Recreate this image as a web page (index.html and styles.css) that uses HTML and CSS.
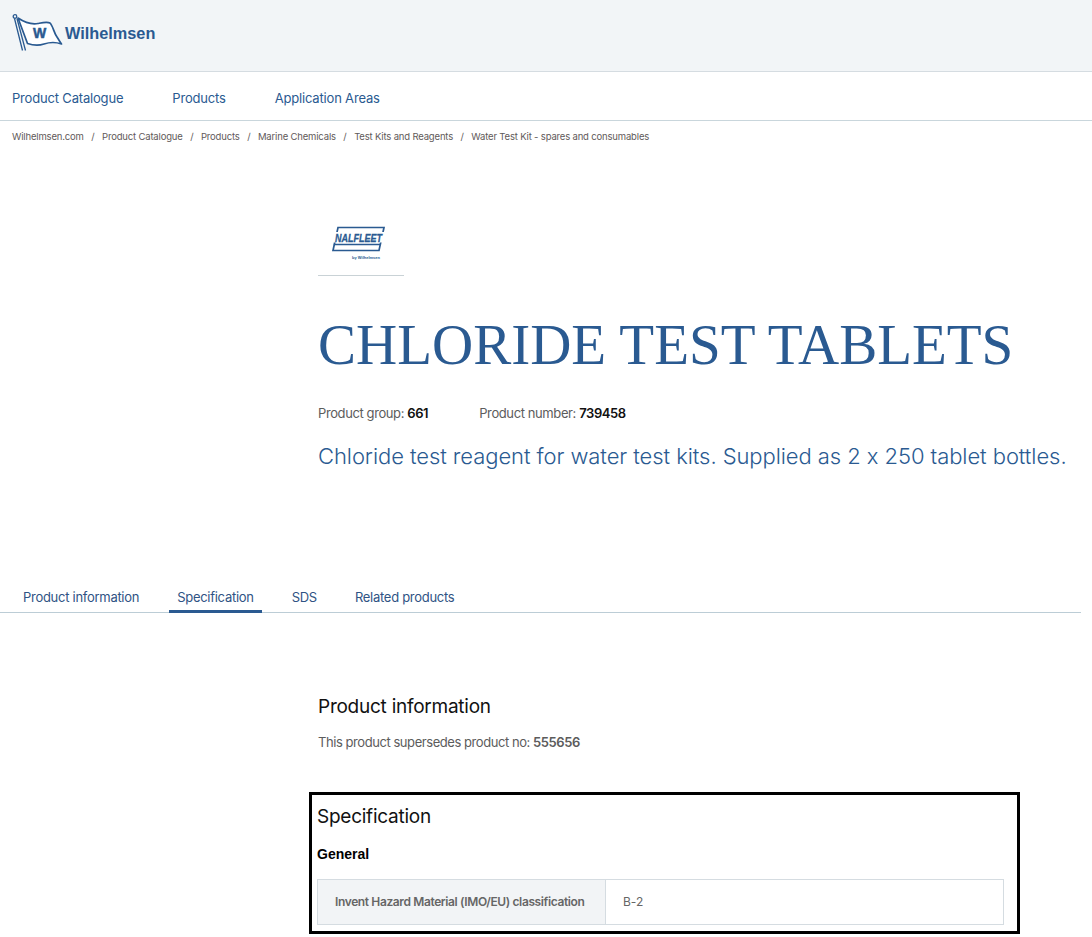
FILE: index.html
```html
<!DOCTYPE html>
<html lang="en">
<head>
<meta charset="utf-8">
<title>Chloride Test Tablets</title>
<link rel="stylesheet" href="styles.css">
</head>
<body>
<header class="top">
  <a class="logo">
    <svg class="flag" width="52" height="40" viewBox="0 0 52 40">
      <circle cx="3" cy="3.500" r="1.800" fill="none" stroke="#2a5a91" stroke-width="1.300"/>
      <path d="M2.500 5.500L10.500 37.500M5 5.500L13.500 37.500" fill="none" stroke="#2a5a91" stroke-width="1.300"/>
      <path d="M6 5C12 9 18 12 26 10.500C31 9.500 35 8.500 38 10C41 13 42 20 45 24C47 27 48 29 49.500 31C44 29 38 29 32 31C26 33 20 32 15.500 30.500L6 5Z" fill="#fff" stroke="#2a5a91" stroke-width="1.700" stroke-linejoin="round"/>
      <text x="27.500" y="24.500" text-anchor="middle" class="flag-w">W</text>
    </svg>
    <span class="logo-name">Wilhelmsen</span>
  </a>
</header>
<nav class="mainnav">
  <a>Product Catalogue</a>
  <a>Products</a>
  <a>Application Areas</a>
</nav>
<ol class="crumbs">
  <li>Wilhelmsen.com</li>
  <li>Product Catalogue</li>
  <li>Products</li>
  <li>Marine Chemicals</li>
  <li>Test Kits and Reagents</li>
  <li>Water Test Kit - spares and consumables</li>
</ol>
<main>
  <section class="hero">
    <div class="brand">
      <svg width="62" height="36" viewBox="0 0 62 36">
        <path d="M6 1.500H52L47 24.500H1Z" fill="none" stroke="#2a5a91" stroke-width="1.700"/>
        <path d="M1.800 18.500H48" fill="none" stroke="#2a5a91" stroke-width="1.300"/>
        <rect x="2" y="6" width="50" height="10.500" fill="#fff"/>
        <text x="3" y="15.500" textLength="47" lengthAdjust="spacingAndGlyphs" class="nalfleet">NALFLEET</text>
        <text x="34" y="32.500" text-anchor="middle" class="nalby">by Wilhelmsen</text>
      </svg>
    </div>
    <h1>CHLORIDE TEST TABLETS</h1>
    <div class="meta">
      <span>Product group: <b>661</b></span>
      <span>Product number: <b>739458</b></span>
    </div>
    <p class="lead">Chloride test reagent for water test kits. Supplied as 2 x 250 tablet bottles.</p>
  </section>
  <div class="tabs">
    <a>Product information</a>
    <a class="active">Specification</a>
    <a>SDS</a>
    <a>Related products</a>
  </div>
  <section class="info">
    <h2>Product information</h2>
    <p class="note">This product supersedes product no: <b>555656</b></p>
  </section>
  <section class="spec">
    <h2>Specification</h2>
    <h3>General</h3>
    <div class="row">
      <div class="key">Invent Hazard Material (IMO/EU) classification</div>
      <div class="val">B-2</div>
    </div>
  </section>
</main>
</body>
</html>
```

FILE: styles.css
```css
* { box-sizing: border-box; }
html, body { margin: 0; padding: 0; height: 937px; overflow: hidden; }
body { background: #fff; font-family: "Inter", "Liberation Sans", sans-serif; color: #5c5c5c; font-feature-settings: "calt" 0; }
.top { height: 72px; background: #f2f5f7; border-bottom: 1px solid #d5dce1; padding: 13px 0 0 12px; }
.logo { display: flex; align-items: flex-start; gap: 1px; }
.flag { display: block; }
.flag-w { font: 900 14px "Liberation Sans", sans-serif; fill: #2a5a91; stroke: #2a5a91; stroke-width: .5px; }
.logo-name { font: 700 16.300px/1 "Liberation Sans", sans-serif; color: #2a5a91; margin-top: 12px; }
.mainnav { height: 49px; border-bottom: 1px solid #c9d6dc; display: flex; align-items: center; gap: 49px; padding: 4px 12px 0; font-size: 13px; letter-spacing: -.18px; color: #2a5a91; }
.crumbs { list-style: none; margin: 0; padding: 10px 12px 0; display: flex; font-size: 9.500px; letter-spacing: -.17px; line-height: 12px; color: #5f5a5a; }
.crumbs li + li::before { content: "/"; margin: 0 7.500px; }
.hero { padding: 82px 0 0 318px; }
.brand { width: 86px; height: 51px; border-bottom: 1px solid #c9d2d6; padding: 1px 0 0 14px; }
.brand svg { display: block; }
.nalfleet { font: italic 700 11.500px "Liberation Sans", sans-serif; fill: #2a5a91; stroke: #2a5a91; stroke-width: .3px; }
.nalby { font: 700 4px "Liberation Sans", sans-serif; fill: #2a5a91; }
h1 { margin: 34px 0 0; font: 400 57px/70px "Liberation Serif", serif; color: #2a5a91; white-space: nowrap; }
.meta { display: flex; gap: 51px; margin-top: 25px; font-size: 13px; letter-spacing: -.4px; line-height: 16px; }
.meta b { font-weight: 600; color: #111; }
.lead { margin: 21px 0 0; font-size: 22px; line-height: 28px; letter-spacing: -.07px; font-weight: 300; color: #2a5a91; white-space: nowrap; }
.tabs { margin-top: 111px; width: 1081px; height: 32px; border-bottom: 1px solid #bccdd6; padding-left: 15px; display: flex; gap: 22px; font-size: 13px; letter-spacing: -.28px; color: #2f5384; }
.tabs a { padding: 0 8px; line-height: 33px; height: 32px; }
.tabs .active { border-bottom: 3px solid #2a5a91; }
.info { padding: 82px 0 0 318px; }
h2 { margin: 0; font-size: 19px; letter-spacing: -.25px; font-weight: 400; line-height: 24px; color: #111; }
.note { margin: 15px 0 0; font-size: 13px; letter-spacing: -.44px; line-height: 16px; }
.note b { font-weight: 600; }
.spec { margin: 42px 0 0 309px; width: 711px; height: 142px; border: 3px solid #000; padding: 10px 13px 0 5px; }
h3 { margin: 17px 0 0; font: 700 14px/16px "Liberation Sans", sans-serif; color: #000; }
.row { display: flex; margin-top: 17px; height: 46px; border: 1px solid #d5dce1; font-size: 12px; letter-spacing: -.38px; align-items: stretch; color: #666; }
.key { width: 288px; background: #f2f4f6; border-right: 1px solid #d5dce1; padding: 0 0 2px 17px; display: flex; align-items: center; font-weight: 600; }
.val { padding: 0 0 2px 17px; display: flex; align-items: center; letter-spacing: 0; }
```
